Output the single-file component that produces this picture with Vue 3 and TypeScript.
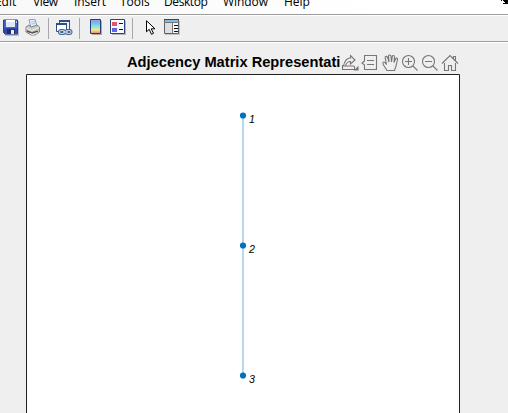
<script setup lang="ts">
interface GraphNode {
  id: number
  y: number
}

const menus: string[] = ['Edit', 'View', 'Insert', 'Tools', 'Desktop', 'Window', 'Help']
const nodes: GraphNode[] = [
  { id: 1, y: 41.5 },
  { id: 2, y: 171.5 },
  { id: 3, y: 301.5 },
]
</script>

<template>
  <div class="window">
    <nav class="menubar">
      <span v-for="item in menus" :key="item" class="menu-item">{{ item }}</span>
      <svg class="dock" width="8" height="5" viewBox="0 0 8 5" shape-rendering="crispEdges">
        <path d="M1 0h1v1h-1zM3 0h5v4h-5v-1h2v-1h-1v-1h-1z" fill="#000" />
      </svg>
    </nav>
    <div class="toolbar">
      <svg class="save" width="17" height="17" viewBox="0 0 17 17">
        <path d="M2 2h14v15H2z" fill="#b9bcc3" />
        <path d="M.5 1h14v14H2L.5 13.500z" fill="#4c5fc8" stroke="#283c94" />
        <path d="M3 1h9v7H3z" fill="#dce9f8" />
        <path d="M3 1h9v2H3z" fill="#fff" />
        <path d="M1 9h13v5H1z" fill="#3448ac" />
        <path d="M4 10h8v5H4z" fill="#202e66" />
        <path d="M8 11h3v4H8z" fill="#e8edf6" />
        <path d="M13 2h1v2h-1z" fill="#b5c4f3" />
      </svg>
      <svg class="print" width="16" height="17" viewBox="0 0 16 17">
        <path d="M4 .7l6-.4 2 7-6 1.500z" fill="#eaf3ff" stroke="#899bb8" />
        <path d="M6 3l4-.5M6.500 5l4-.5" stroke="#a9bce0" />
        <path d="M1 8l3-2 2 2 6-2 2.500 2v5l-4.500 3H6l-5-3z" fill="#c8c8c8" stroke="#858585" />
        <path d="M1.500 9l5 2.500 7.500-3" fill="none" stroke="#f4f4f4" />
        <path d="M2 12l5 2 6-2" fill="none" stroke="#555" stroke-width="1.5" />
        <path d="M5 14.500l3 1 4-1.500" fill="none" stroke="#eee" />
        <path d="M11 11h2" stroke="#d8c566" />
      </svg>
      <i class="sep" />
      <svg class="link" width="17" height="17" viewBox="0 0 17 17">
        <path d="M3.500 1.500h10v9h-10z" fill="#edf3fa" stroke="#304e86" />
        <path d="M3 1h11v2H3z" fill="#304e86" />
        <path d="M.5 4.500h10v8H.5z" fill="#fff" stroke="#304e86" />
        <path d="M0 4h11v2H0z" fill="#304e86" />
        <g fill="none" stroke="#476592" stroke-width="3">
          <rect x="3.500" y="11.500" width="5" height="3" rx="1.500" />
          <rect x="10" y="11.500" width="5" height="3" rx="1.500" />
        </g>
        <g fill="none" stroke="#c3d4e7" stroke-width="1.2">
          <rect x="3.500" y="11.500" width="5" height="3" rx="1.500" />
          <rect x="10" y="11.500" width="5" height="3" rx="1.500" />
          <path d="M7 13h5" />
        </g>
      </svg>
      <i class="sep" />
      <svg class="colorbar" width="12" height="16" viewBox="0 0 12 16">
        <defs>
          <linearGradient id="spectrum" x2="0" y2="1">
            <stop offset="0" stop-color="#a98ee8" />
            <stop offset=".25" stop-color="#70bdf2" />
            <stop offset=".5" stop-color="#88e7cf" />
            <stop offset=".75" stop-color="#ffe38b" />
            <stop offset="1" stop-color="#ed8068" />
          </linearGradient>
        </defs>
        <path d="M2 2h10v14H2z" fill="#aaa" />
        <path d="M.5 .5h10v14H.5z" fill="url(#spectrum)" stroke="#263d78" />
      </svg>
      <svg class="legend" width="16" height="16" viewBox="0 0 16 16">
        <path d="M2 2h14v14H2z" fill="#b5b5b5" />
        <path d="M.5 .5h14v14H.5z" fill="#f8fbff" stroke="#294279" />
        <path d="M2 3h5v4H2z" fill="#e15b60" />
        <path d="M2 9h5v4H2z" fill="#6367dc" />
        <path d="M9 4h4v1H9zM9 10h4v1H9z" fill="#111" />
      </svg>
      <i class="sep" />
      <svg class="pointer" width="10" height="16" viewBox="0 0 10 16">
        <path d="M.5 .8v11l2.700-2.500 2.300 5 2-1-2.300-4.500H9z" fill="#fff" stroke="#000" />
      </svg>
      <svg class="inspector" width="17" height="16" viewBox="0 0 17 16">
        <path d="M1 2h15v14H1z" fill="#c4c4c4" />
        <path d="M.5 .5h14v14H.5z" fill="#f7f7f7" stroke="#5d6268" />
        <path d="M0 0h15v1H0z" fill="#244b68" />
        <path d="M1 1h13v2H1z" fill="#82bce5" />
        <path d="M1 4h7v10H1z" fill="#dedede" />
        <path d="M8 3h1v12H8zM0 3h15v1H0z" fill="#777" />
        <path d="M10 6h4v1h-4zM10 9h4v1h-4zM10 12h4v1h-4z" fill="#111" />
      </svg>
    </div>
    <main class="figure">
      <header class="plot-header">
        <h1>Adjecency Matrix Representati</h1>
        <div class="plot-tools">
          <svg width="18" height="18" viewBox="0 0 18 18">
            <path d="M1.500 11v4.500h12V12M2.500 12c1-5 3-8 7-8V1.500L14 6l-4.500 4V7.500c-3 0-4 1-5 4.500z" />
            <path d="M5 12h8M17 13v3h-3z" class="solid" />
          </svg>
          <svg width="18" height="18" viewBox="0 0 18 18">
            <path d="M3.500 7V1.500h12v14h-12V11L1 9zM6 6.500h7M6 10.500h7" />
          </svg>
          <svg width="18" height="18" viewBox="0 0 18 18">
            <path transform="translate(1 0)" d="M5 16.500L1.500 11C.5 9 .8 8 2 8c1 0 1.500 1 2.500 2.500L3.200 4c-.3-2 2-2.200 2.400-.5L7 8 6.500 2.200C6.500.5 9 .5 9 2.200L9.500 8l.8-5.500C10.600 1 12.700 1.200 12.500 3L12 8.500 13.500 5c.5-1.500 2.300-1 2 .5L14 12l-1.500 4.500z" />
          </svg>
          <svg width="18" height="18" viewBox="0 0 18 18">
            <circle cx="7.500" cy="7.500" r="6" /><path d="M12 12l4.500 4.500M4 7.500h7M7.500 4v7" />
          </svg>
          <svg width="18" height="18" viewBox="0 0 18 18">
            <circle cx="7.500" cy="7.500" r="6" /><path d="M12 12l4.500 4.500M4 7.500h7" />
          </svg>
          <svg width="18" height="18" viewBox="0 0 18 18">
            <path d="M1 9.500L9 1.500l8 8M12.500 5V2.500h2V7M3.500 9v7.500h4v-5h3v5h4V9" />
          </svg>
        </div>
      </header>
      <svg class="axes" width="434" height="340" viewBox="0 0 434 340">
        <path d="M.5 341V.5h433V341" class="frame" />
        <path d="M217 41v260" class="edge" />
        <g v-for="node in nodes" :key="node.id">
          <circle cx="217" :cy="node.y" r="3.100" class="node" />
          <text x="223" :y="node.y + 7.500">{{ node.id }}</text>
        </g>
      </svg>
    </main>
  </div>
</template>

<style>
body {
  margin: 0;
  overflow: hidden;
}
</style>

<style scoped>
.window {
  width: 508px;
  height: 413px;
  overflow: hidden;
  background: #efefef;
}
.menubar {
  position: relative;
  display: grid;
  grid-template-columns: 38px 41px 46px 44px 59px 61px 40px;
  box-sizing: border-box;
  height: 16px;
  border-bottom: 1px solid #fff;
  background: linear-gradient(90deg, #f8f8f8, #fff 75%);
  box-shadow: inset 0 -1px #9c9c9c;
  font: 12px/16px "Open Sans", "Noto Sans", sans-serif;
  color: #000;
}
.menu-item {
  height: 14px;
  margin: -6px 0 0 -5px;
  letter-spacing: -0.05px;
}
.menu-item:nth-child(5),
.menu-item:nth-child(2) {
  letter-spacing: -0.4px;
}
.dock {
  position: absolute;
  top: 0;
  right: 0;
}
.toolbar {
  display: flex;
  align-items: flex-start;
  box-sizing: border-box;
  height: 27px;
  padding: 3px 0 0 3px;
  border-bottom: 1px solid #fff;
  box-shadow: inset 0 -1px #9c9c9c;
}
.toolbar svg {
  flex: none;
}
.print {
  margin: 0 1px 0 5px;
}
.sep {
  flex: none;
  width: 1px;
  height: 21px;
  margin: -1px 7px 0 6px;
  background: #a7a7a7;
}
.colorbar {
  margin-left: 3px;
}
.legend {
  margin-left: 8px;
}
.pointer {
  margin: 1px 0 0 6px;
}
.inspector {
  margin-left: 8px;
}
.figure {
  padding: 11px 0 0 26px;
}
.plot-header {
  display: flex;
  height: 20px;
  padding-left: 101px;
}
h1 {
  flex: none;
  width: 214px;
  margin: -1px 0 0;
  font: bold 14.67px/18px "Liberation Sans", Arial, sans-serif;
  white-space: nowrap;
  color: #000;
}
.plot-tools {
  display: flex;
  gap: 2px;
}
.plot-tools svg {
  fill: none;
  stroke: #777;
  stroke-width: 1.1;
}
.plot-tools .solid {
  fill: #777;
}
.axes {
  display: block;
}
.frame {
  fill: #fff;
  stroke: #222;
}
.edge {
  stroke: #b8d7ed;
  stroke-width: 2;
}
.node {
  fill: #0072bd;
}
.axes text {
  font: italic 10.67px "Liberation Sans", Arial, sans-serif;
  fill: #000;
}
</style>
